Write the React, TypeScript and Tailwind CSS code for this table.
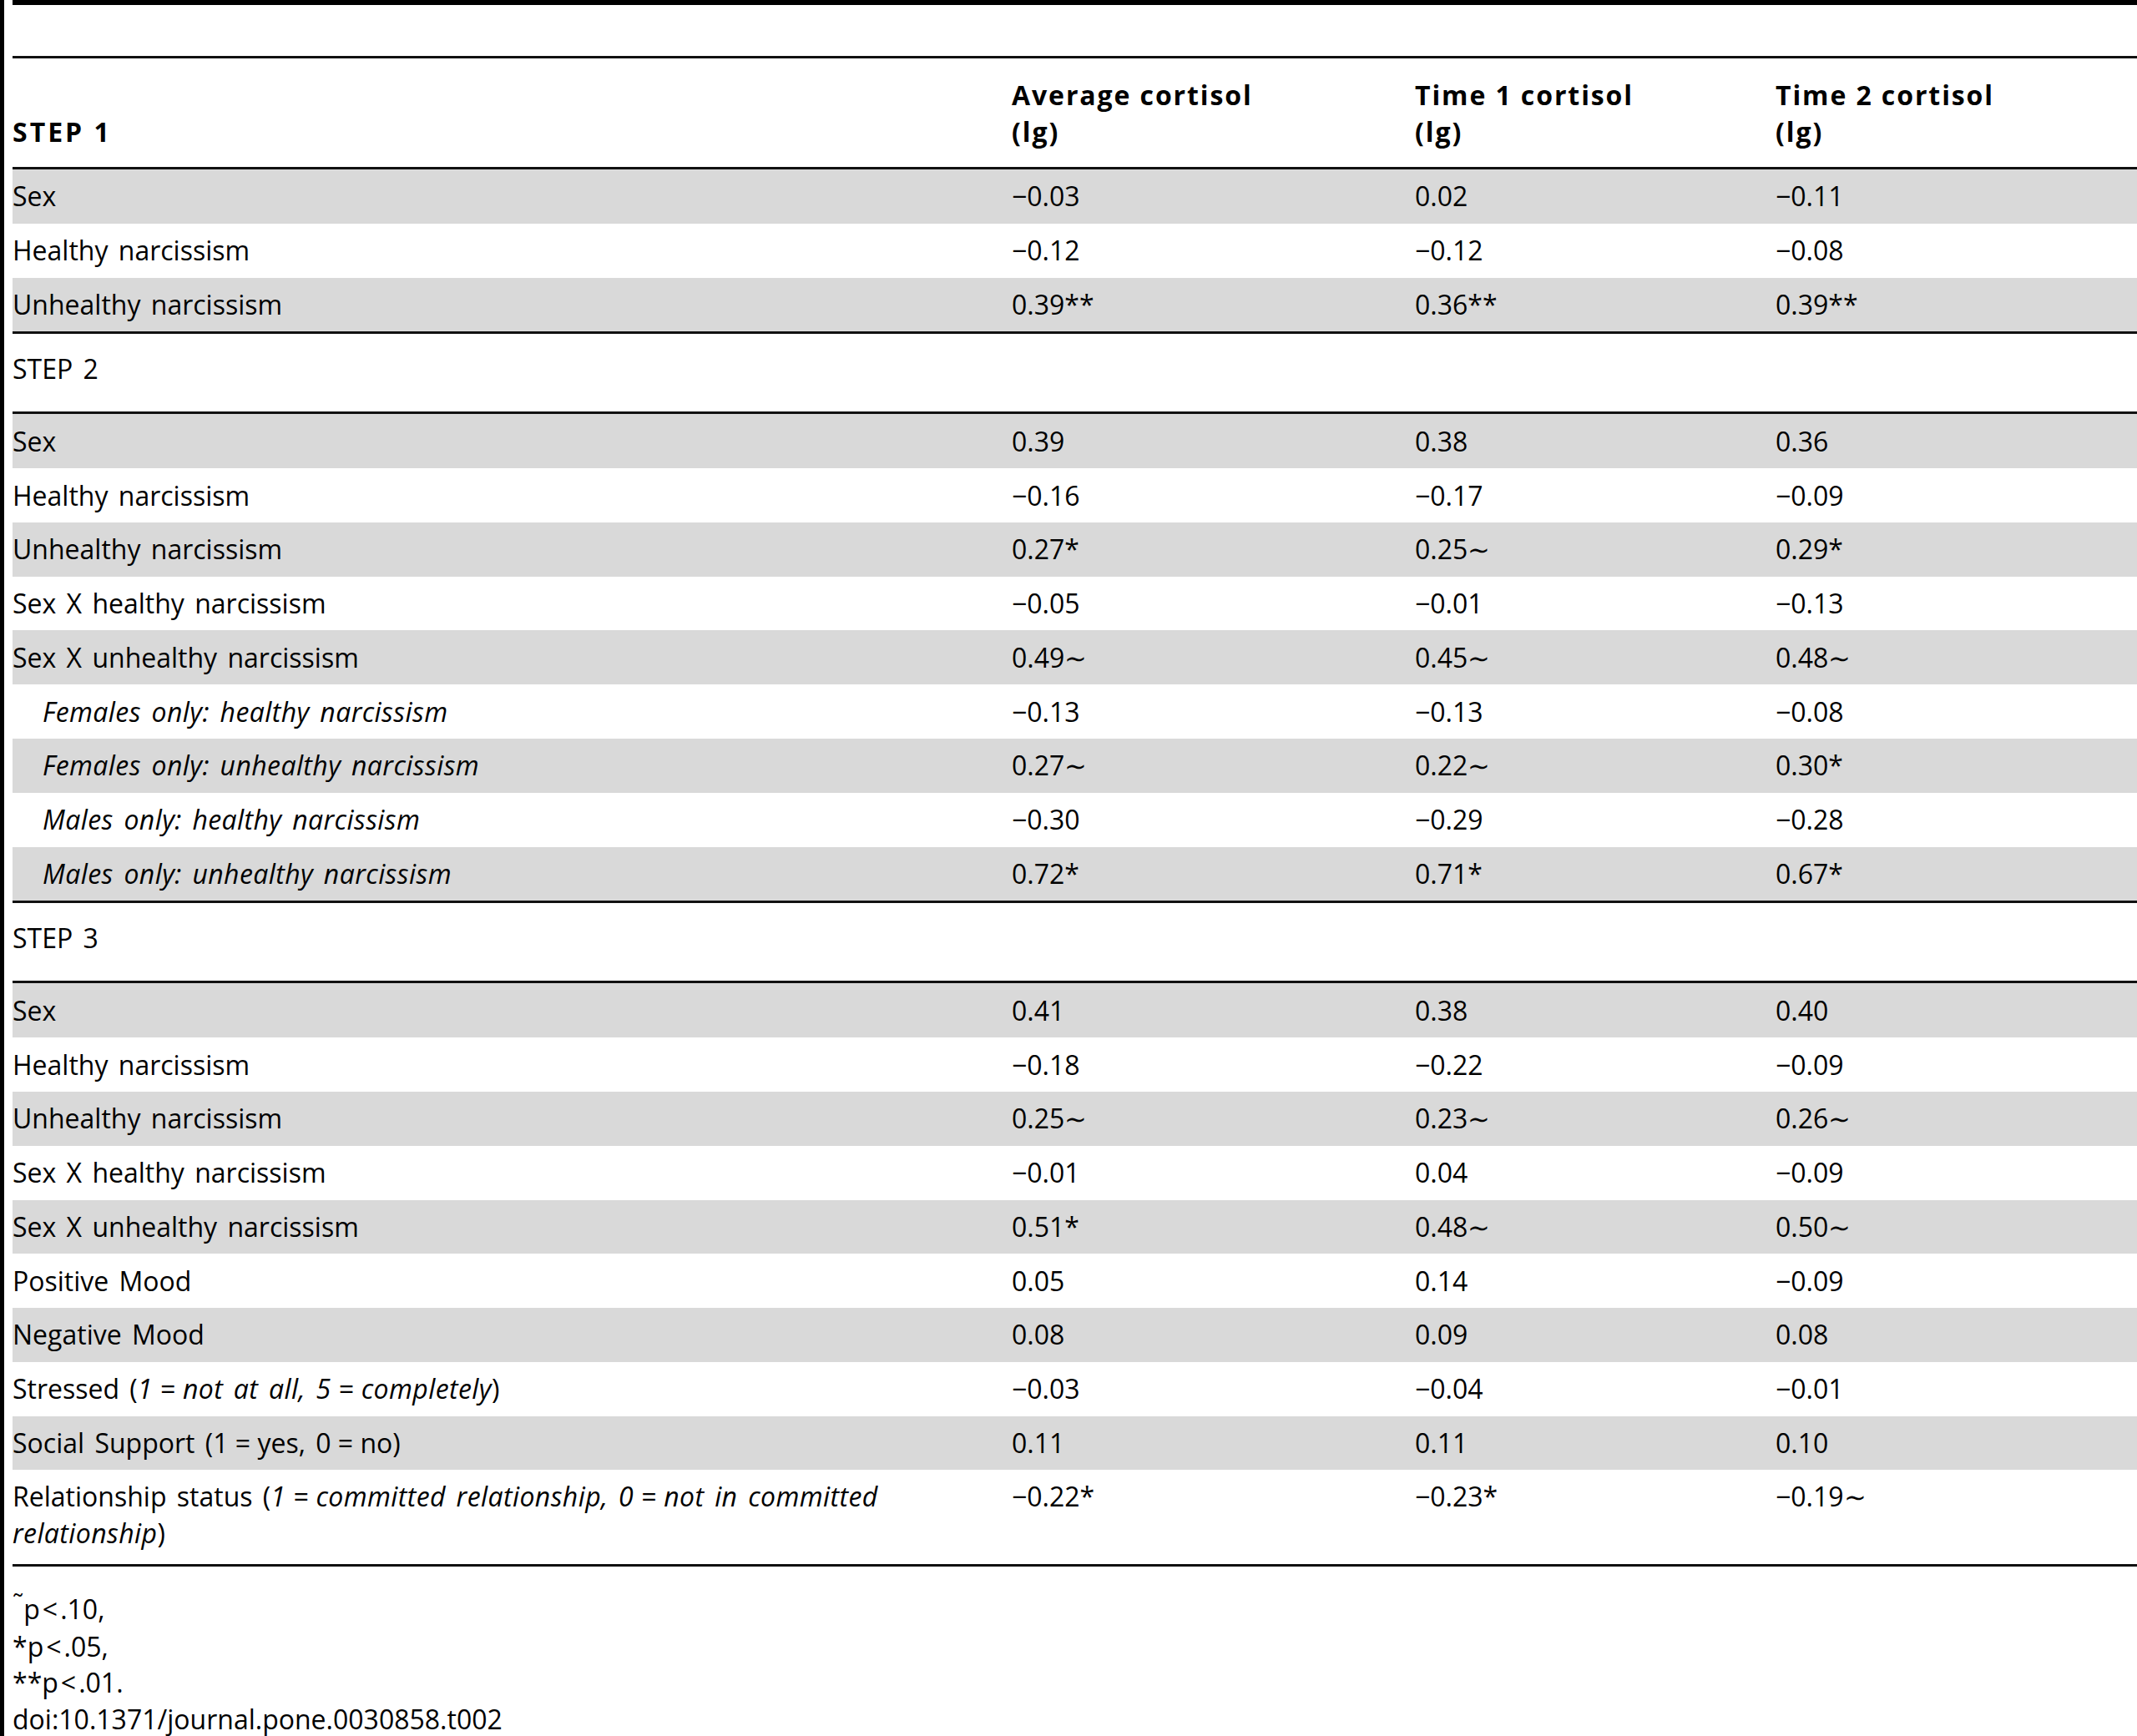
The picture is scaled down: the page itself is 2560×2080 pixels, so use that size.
import React from "react"

type Row = {
  label: React.ReactNode
  values: [string, string, string]
  gray: boolean
  indent?: boolean
  tall?: boolean
}

function Eq() {
  return <span className="[word-spacing:0px]"> = </span>
}

const step1: Row[] = [
  { label: "Sex", values: ["−0.03", "0.02", "−0.11"], gray: true },
  { label: "Healthy narcissism", values: ["−0.12", "−0.12", "−0.08"], gray: false },
  { label: "Unhealthy narcissism", values: ["0.39**", "0.36**", "0.39**"], gray: true },
]

const step2: Row[] = [
  { label: "Sex", values: ["0.39", "0.38", "0.36"], gray: true },
  { label: "Healthy narcissism", values: ["−0.16", "−0.17", "−0.09"], gray: false },
  { label: "Unhealthy narcissism", values: ["0.27*", "0.25∼", "0.29*"], gray: true },
  { label: "Sex X healthy narcissism", values: ["−0.05", "−0.01", "−0.13"], gray: false },
  { label: "Sex X unhealthy narcissism", values: ["0.49∼", "0.45∼", "0.48∼"], gray: true },
  { label: "Females only: healthy narcissism", values: ["−0.13", "−0.13", "−0.08"], gray: false, indent: true },
  { label: "Females only: unhealthy narcissism", values: ["0.27∼", "0.22∼", "0.30*"], gray: true, indent: true },
  { label: "Males only: healthy narcissism", values: ["−0.30", "−0.29", "−0.28"], gray: false, indent: true },
  { label: "Males only: unhealthy narcissism", values: ["0.72*", "0.71*", "0.67*"], gray: true, indent: true },
]

const step3: Row[] = [
  { label: "Sex", values: ["0.41", "0.38", "0.40"], gray: true },
  { label: "Healthy narcissism", values: ["−0.18", "−0.22", "−0.09"], gray: false },
  { label: "Unhealthy narcissism", values: ["0.25∼", "0.23∼", "0.26∼"], gray: true },
  { label: "Sex X healthy narcissism", values: ["−0.01", "0.04", "−0.09"], gray: false },
  { label: "Sex X unhealthy narcissism", values: ["0.51*", "0.48∼", "0.50∼"], gray: true },
  { label: "Positive Mood", values: ["0.05", "0.14", "−0.09"], gray: false },
  { label: "Negative Mood", values: ["0.08", "0.09", "0.08"], gray: true },
  {
    label: (
      <>
        Stressed (
        <i className="tracking-[0.4px]">
          1<Eq />not at all, 5<Eq />completely
        </i>
        )
      </>
    ),
    values: ["−0.03", "−0.04", "−0.01"],
    gray: false,
  },
  {
    label: (
      <>
        Social Support (1<Eq />yes, 0<Eq />no)
      </>
    ),
    values: ["0.11", "0.11", "0.10"],
    gray: true,
  },
  {
    label: (
      <>
        Relationship status (
        <i className="tracking-[0.4px]">
          1<Eq />committed relationship, 0<Eq />not in committed
        </i>
        <br />
        <i className="tracking-[0.4px]">relationship</i>)
      </>
    ),
    values: ["−0.22*", "−0.23*", "−0.19∼"],
    gray: false,
    tall: true,
  },
]

const cols = "grid grid-cols-[1197px_483px_432px_1fr]"

function DataRow({ row }: { row: Row }) {
  return (
    <div
      className={`${cols} ${row.gray ? "bg-[#d9d9d9]" : "bg-white"} ${
        row.tall ? "pt-[10px] pb-[15px]" : "py-[10.4px]"
      }`}
    >
      <div className={row.indent ? "pl-[36px] italic tracking-[0.4px]" : ""}>{row.label}</div>
      {row.values.map((v, i) => (
        <div key={i}>{v}</div>
      ))}
    </div>
  )
}

function StepRow({ label }: { label: string }) {
  return (
    <div className="pt-[20px] pb-[29px] border-b-[3px] border-[#111]">{label}</div>
  )
}

function Lt() {
  return <span className="px-[3px]">&lt;</span>
}

export default function App() {
  return (
    <div className="min-h-[2080px] bg-white border-l-[5px] border-black pl-[10px] font-['Open_Sans',sans-serif] text-[32px] leading-[44px] text-black [word-spacing:4px]">
      <div className="h-[67px] border-t-[6px] border-black" />

      <div className={`${cols} border-t-[3px] border-b-[3px] border-[#111] pt-[22px] pb-[20px] items-end font-bold [word-spacing:0px]`}>
        <div className="tracking-[3px]">STEP 1</div>
        <div className="tracking-[1.9px]">
          Average cortisol
          <br />
          (lg)
        </div>
        <div className="tracking-[1.9px]">
          Time 1 cortisol
          <br />
          (lg)
        </div>
        <div className="tracking-[1.9px]">
          Time 2 cortisol
          <br />
          (lg)
        </div>
      </div>

      <div className="border-b-[3px] border-[#111]">
        {step1.map((r, i) => (
          <DataRow key={i} row={r} />
        ))}
      </div>

      <StepRow label="STEP 2" />
      <div className="border-b-[3px] border-[#111]">
        {step2.map((r, i) => (
          <DataRow key={i} row={r} />
        ))}
      </div>

      <StepRow label="STEP 3" />
      <div className="border-b-[3px] border-[#111]">
        {step3.map((r, i) => (
          <DataRow key={i} row={r} />
        ))}
      </div>

      <div className="pt-[29px] leading-[43.5px]">
        <div>
          <span className="relative -top-[9px] text-[30px]">˜</span>p<Lt />.10,
        </div>
        <div>
          *p<Lt />.05,
        </div>
        <div>
          **p<Lt />.01.
        </div>
        <div>doi:10.1371/journal.pone.0030858.t002</div>
      </div>
    </div>
  )
}
